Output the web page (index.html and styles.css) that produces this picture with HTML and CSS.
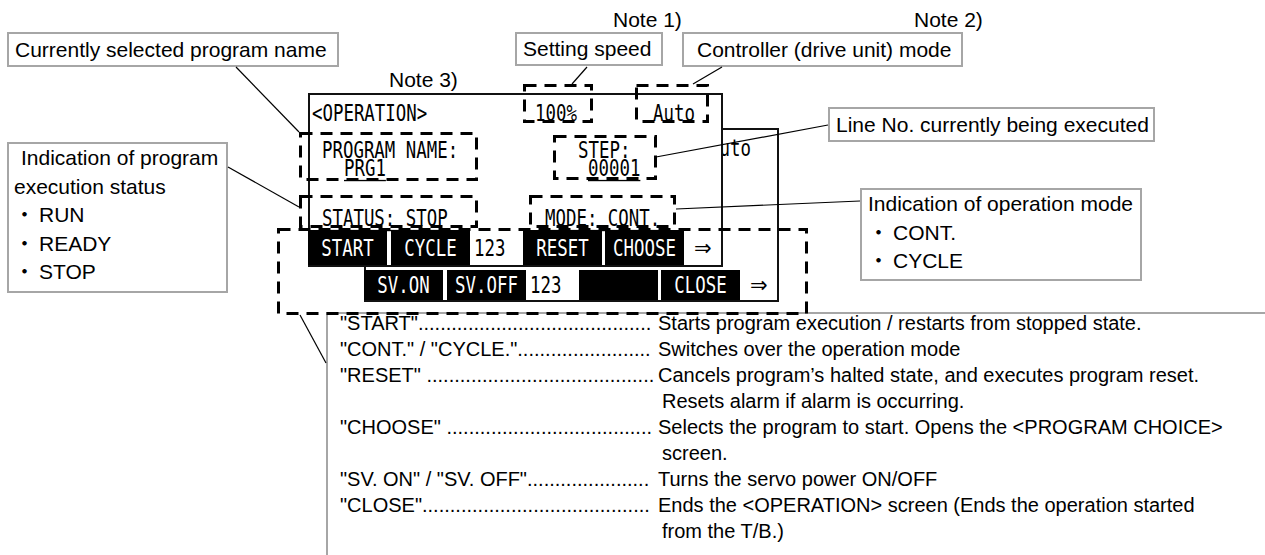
FILE: index.html
```html
<!DOCTYPE html>
<html lang="en">
<head>
    <title>operation screen</title>
    <link rel="stylesheet" href="styles.css">
</head>
<body>
<div class="sheet">

    <div class="note note1">Note 1)</div>
    <div class="note note2">Note 2)</div>
    <div class="note note3">Note 3)</div>

    <div class="callout c-name">Currently selected program name</div>
    <div class="callout c-speed">Setting speed</div>
    <div class="callout c-mode">Controller (drive unit) mode</div>
    <div class="callout c-line">Line No. currently being executed</div>

    <div class="callout c-status">
        <div class="first">Indication of program</div>
        <div>execution status</div>
        <div><span class="dot">・</span>RUN</div>
        <div><span class="dot">・</span>READY</div>
        <div><span class="dot">・</span>STOP</div>
    </div>

    <div class="callout c-opmode">
        <div>Indication of operation mode</div>
        <div><span class="dot">・</span>CONT.</div>
        <div><span class="dot">・</span>CYCLE</div>
    </div>

    <!-- second page of the screen, sits behind the first one -->
    <div class="screen back">
        <div class="head">
            <span class="lcd">&lt;OPERATION&gt;</span>
            <span class="lcd">100%</span>
            <span class="lcd">Auto</span>
        </div>
        <div class="info"></div>
        <div class="state"></div>
        <div class="keys">
            <span class="key k1"><span class="lcd">SV.ON</span></span>
            <span class="key"><span class="lcd">SV.OFF</span></span>
            <span class="num"><span class="lcd">123</span></span>
            <span class="key k3"></span>
            <span class="key k4"><span class="lcd">CLOSE</span></span>
            <span class="arrow">⇒</span>
        </div>
    </div>

    <div class="screen front">
        <div class="head">
            <span class="lcd">&lt;OPERATION&gt;</span>
            <span class="lcd">100%</span>
            <span class="lcd">Auto</span>
        </div>
        <div class="info">
            <div class="field name">
                <span class="lcd">PROGRAM NAME:</span>
                <span class="lcd val u">PRG1</span>
            </div>
            <div class="field step">
                <span class="lcd">STEP:</span>
                <span class="lcd val u">00001</span>
            </div>
        </div>
        <div class="state">
            <span class="lcd u">STATUS: STOP</span>
            <span class="lcd u">MODE: CONT.</span>
        </div>
        <div class="keys">
            <span class="key k1"><span class="lcd">START</span></span>
            <span class="key"><span class="lcd">CYCLE</span></span>
            <span class="num"><span class="lcd">123</span></span>
            <span class="key k3"><span class="lcd">RESET</span></span>
            <span class="key k4"><span class="lcd">CHOOSE</span></span>
            <span class="arrow">⇒</span>
        </div>
    </div>

    <div class="legend">
        <div class="list">
            <div class="term">"START"..........................................</div>
            <div class="desc">Starts program execution / restarts from stopped state.</div>

            <div class="term">"CONT." / "CYCLE."........................</div>
            <div class="desc">Switches over the operation mode</div>

            <div class="term">"RESET" .........................................</div>
            <div class="desc">Cancels program’s halted state, and executes program reset.<span class="more">Resets alarm if alarm is occurring.</span></div>

            <div class="term">"CHOOSE" .....................................</div>
            <div class="desc">Selects the program to start. Opens the &lt;PROGRAM CHOICE&gt;<span class="more">screen.</span></div>

            <div class="term">"SV. ON" / "SV. OFF"......................</div>
            <div class="desc">Turns the servo power ON/OFF</div>

            <div class="term">"CLOSE".........................................</div>
            <div class="desc">Ends the &lt;OPERATION&gt; screen (Ends the operation started<span class="more">from the T/B.)</span></div>
        </div>
    </div>

    <svg class="marks" width="1265" height="555" viewBox="0 0 1265 555">
        <g class="dash">
            <rect x="524.5" y="85.5" width="67" height="36"/>
            <rect x="636.5" y="85.5" width="71" height="36"/>
            <rect x="300.5" y="133.5" width="176" height="46"/>
            <rect x="554.5" y="136.5" width="101" height="42"/>
            <rect x="300.5" y="196.5" width="176" height="30"/>
            <rect x="530.5" y="196.5" width="144" height="30"/>
            <rect x="278.5" y="229.5" width="528" height="84"/>
        </g>
        <g class="lead">
            <line x1="236" y1="67" x2="299" y2="132"/>
            <line x1="587" y1="67" x2="572" y2="84"/>
            <line x1="722" y1="67" x2="693" y2="84"/>
            <line x1="828" y1="125" x2="656" y2="157"/>
            <line x1="860" y1="201" x2="676" y2="209"/>
            <line x1="228" y1="167" x2="299" y2="207"/>
            <line x1="300" y1="315" x2="326" y2="363"/>
        </g>
    </svg>

</div>
</body>
</html>
```

FILE: styles.css
```css
* {
    box-sizing: border-box;
}
body {
    margin: 0;
    background: #fff;
    color: #000;
    font-family: "Liberation Sans", Arial, "Noto Sans CJK JP", sans-serif;
}
.sheet {
    position: relative;
    width: 1265px;
    height: 555px;
    overflow: hidden;
}

/* notes and callouts */
.note {
    position: absolute;
    font-size: 21px;
    line-height: 24px;
}
.note1 { left: 613px; top: 8px; }
.note2 { left: 914px; top: 8px; }
.note3 { left: 389px; top: 68px; }

.callout {
    position: absolute;
    background: #fff;
    border: 2px solid #a6a6a6;
    font-size: 21px;
    line-height: 31px;
    padding: 0 6px;
    white-space: nowrap;
}
.c-name { left: 7px; top: 32px; width: 332px; height: 35px; }
.c-speed { left: 515px; top: 32px; width: 148px; height: 34px; line-height: 30px; }
.c-mode { left: 682px; top: 32px; width: 281px; height: 35px; padding-left: 13px; }
.c-line { left: 828px; top: 107px; width: 327px; height: 35px; }
.c-opmode {
    left: 860px;
    top: 188px;
    width: 282px;
    height: 93px;
    line-height: 28.5px;
}
.c-status {
    left: 7px;
    top: 142px;
    width: 221px;
    height: 151px;
    line-height: 28.5px;
    padding: 0 0 0 5px;
}
.c-status .first {
    padding-left: 7px;
}
.dot {
    margin-right: 4px;
}

/* teaching pendant screen */
.screen {
    position: absolute;
    width: 415px;
    height: 174px;
    border: 2px solid #111;
    background: #fff;
    font-family: "DejaVu Sans Mono", monospace;
    font-size: 17.4px;
}
.front { left: 308px; top: 93px; z-index: 2; }
.back { left: 364px; top: 128px; z-index: 1; }

.lcd {
    display: inline-block;
    line-height: 18px;
    white-space: pre;
    transform: scaleY(1.32);
}
.u {
    text-decoration: underline;
    text-decoration-thickness: 1px;
    text-underline-offset: 3px;
}

.head {
    height: 36px;
    display: grid;
    grid-template-columns: 223px 118px 1fr;
    align-items: center;
    padding-left: 2px;
}
.info {
    height: 46px;
    display: grid;
    grid-template-columns: 256px 1fr;
    padding: 10px 0 0 12px;
}
.field {
    display: flex;
    flex-direction: column;
    align-items: flex-start;
}
.name .val { margin-left: 22px; }
.step .val { margin-left: 10px; }
.state {
    height: 53px;
    display: grid;
    grid-template-columns: 223px 1fr;
    align-items: start;
    padding: 32px 0 0 12px;
}

.keys {
    height: 35px;
    display: flex;
    margin-left: -2px;
}
.back .keys {
    height: 30px;
    margin-top: 5px;
}
.key {
    width: 79px;
    background: #000;
    color: #fff;
    display: flex;
    align-items: center;
    justify-content: center;
}
.k1 { margin-right: 4px; }
.k3 { margin-left: 1px; }
.k4 { margin-left: 3px; }
.num {
    width: 52px;
    padding-left: 4px;
    display: flex;
    align-items: center;
}
.arrow {
    flex: 1;
    padding-left: 10px;
    display: flex;
    align-items: center;
    font-family: "DejaVu Sans", sans-serif;
    font-size: 21px;
}

/* explanation of the keys */
.legend {
    position: absolute;
    left: 326px;
    top: 312px;
    width: 1000px;
    height: 300px;
    border: 2px solid #a6a6a6;
    background: #fff;
    font-size: 20px;
    line-height: 26px;
    padding-left: 12px;
}
.list {
    margin-top: -4px;
    display: grid;
    grid-template-columns: 315px 1fr;
    column-gap: 3px;
    align-items: start;
}
.term {
    white-space: pre;
}
.more {
    display: block;
    padding-left: 4px;
}

/* dashed marks and leader lines over everything */
.marks {
    position: absolute;
    left: 0;
    top: 0;
    z-index: 3;
    pointer-events: none;
}
.dash rect {
    fill: none;
    stroke: #000;
    stroke-width: 3;
    stroke-dasharray: 12 8;
}
.lead line {
    stroke: #000;
    stroke-width: 1.2;
}
```
